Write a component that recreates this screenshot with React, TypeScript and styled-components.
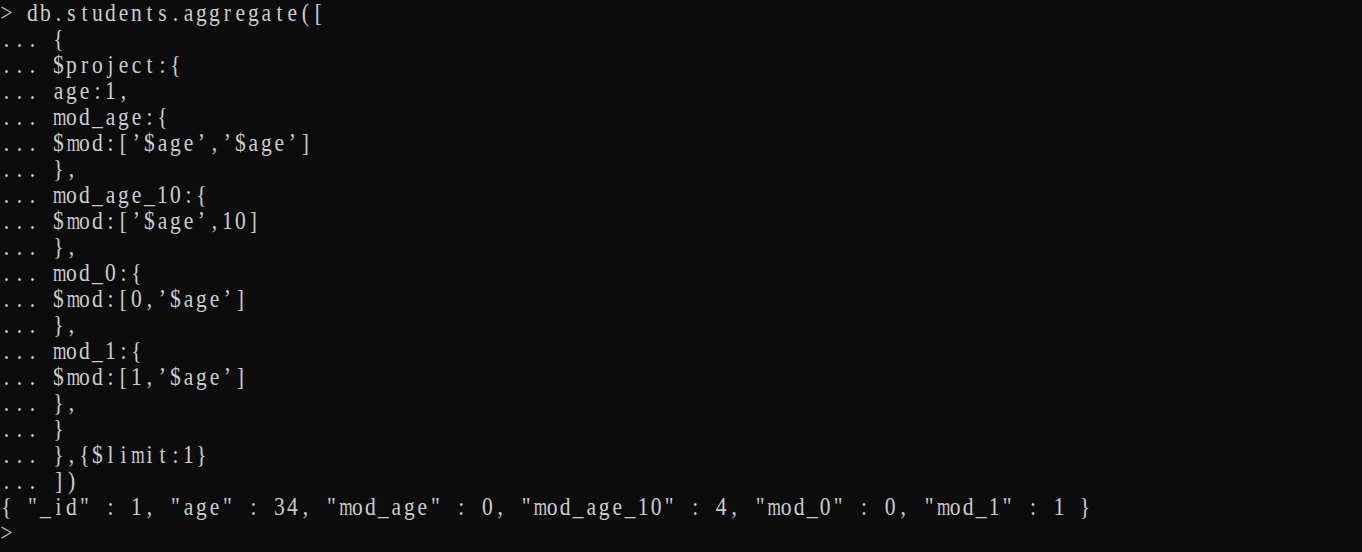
import React from "react";
import styled, { createGlobalStyle } from "styled-components";

const GlobalStyle = createGlobalStyle`
  html, body {
    margin: 0;
    padding: 0;
    background: #0c0c0c;
  }
  body {
    overflow: hidden;
  }
`;

const CELL = 13;
const SQUEEZE = 0.86;
const WIDE = new Set(["m", "M", "w", "W"]);

const Terminal = styled.div`
  box-sizing: border-box;
  width: 1362px;
  height: 552px;
  padding-top: 0;
  background: #0c0c0c;
  color: #cccccc;
  font-family: "Liberation Serif", "Times New Roman", serif;
  font-size: 25px;
  display: flex;
  flex-direction: column;
`;

/* one terminal row: a grid of fixed cells, squeezed to look like a condensed console face */
const Line = styled.div`
  display: flex;
  height: 26px;
  line-height: 26px;
  white-space: pre;
  transform: scaleX(${SQUEEZE});
  transform-origin: 0 0;
`;

const Cell = styled.span<{ $wide?: boolean }>`
  flex: 0 0 ${CELL / SQUEEZE}px;
  width: ${CELL / SQUEEZE}px;
  text-align: center;
  transform: ${(p) => (p.$wide ? "scaleX(0.8)" : "none")};
`;

const lines: string[] = [
  "> db.students.aggregate([",
  "... {",
  "... $project:{",
  "... age:1,",
  "... mod_age:{",
  "... $mod:[\u2019$age\u2019,\u2019$age\u2019]",
  "... },",
  "... mod_age_10:{",
  "... $mod:[\u2019$age\u2019,10]",
  "... },",
  "... mod_0:{",
  "... $mod:[0,\u2019$age\u2019]",
  "... },",
  "... mod_1:{",
  "... $mod:[1,\u2019$age\u2019]",
  "... },",
  "... }",
  "... },{$limit:1}",
  "... ])",
  '{ "_id" : 1, "age" : 34, "mod_age" : 0, "mod_age_10" : 4, "mod_0" : 0, "mod_1" : 1 }',
  ">",
];

export default function App() {
  return (
    <>
      <GlobalStyle />
      <Terminal>
        {lines.map((l, i) => (
          <Line key={i}>
            {Array.from(l).map((ch, j) => (
              <Cell key={j} $wide={WIDE.has(ch)}>
                {ch}
              </Cell>
            ))}
          </Line>
        ))}
      </Terminal>
    </>
  );
}
